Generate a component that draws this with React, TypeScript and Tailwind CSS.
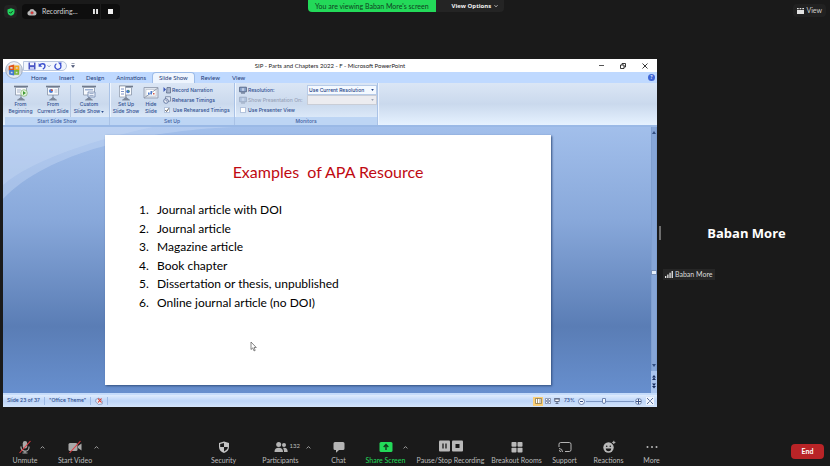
import React from "react";

type IconProps = { className?: string };

const zoomFont = "font-['Lato','Open_Sans',sans-serif]";
const ribbonFont = "font-['Inter','Open_Sans',sans-serif]";

/* ---------- Meeting icons ---------- */

function ShieldCheck({ className = "" }: IconProps) {
  return (
    <svg viewBox="0 0 16 16" className={className} aria-hidden="true">
      <path d="M8 0.5 15 3v5c0 4-3 6.400-7 7.700C4 14.400 1 12 1 8V3z" fill="#22d45e" />
      <path d="m4.600 8 2.500 2.500 4.500-4.700" fill="none" stroke="#14331f" strokeWidth="2" />
    </svg>
  );
}

function CloudRecord({ className = "" }: IconProps) {
  return (
    <svg viewBox="0 0 20 16" className={className} aria-hidden="true">
      <path d="M5 15a4.500 4.500 0 0 1-.6-8.900A6 6 0 0 1 15.700 6 4.600 4.600 0 0 1 15 15z" fill="#b9b9b9" />
      <circle cx="10" cy="9.500" r="3" fill="#e02f2f" stroke="#8d8d8d" strokeWidth="1" />
    </svg>
  );
}

function Chevron({ className = "", down = false }: IconProps & { down?: boolean }) {
  return (
    <svg viewBox="0 0 8 8" className={className} aria-hidden="true">
      <path d={down ? "M1 2.500 4 5.500 7 2.500" : "M1 5.500 4 2.500 7 5.500"} fill="none" stroke="currentColor" strokeWidth="1.500" />
    </svg>
  );
}

function MicOff() {
  return (
    <svg viewBox="0 0 14 14" className="size-[14px]" aria-hidden="true">
      <rect x="4.800" y="1" width="4.400" height="7.500" rx="2.200" fill="#a9a9a9" />
      <path d="M3 6.500v.7a4 4 0 0 0 8 0v-.7M7 11.300V13M4.500 13h5" fill="none" stroke="#a9a9a9" strokeWidth="1.200" />
      <path d="M1.500 13 12.500 1" stroke="#e2383f" strokeWidth="1.100" />
    </svg>
  );
}

function VideoOff() {
  return (
    <svg viewBox="0 0 14 14" className="size-[14px]" aria-hidden="true">
      <rect x="0.500" y="3" width="9" height="8" rx="1.500" fill="#a9a9a9" />
      <path d="m10 6 3.500-2.500v7L10 8z" fill="#a9a9a9" />
      <path d="M1.500 13 12.500 1" stroke="#e2383f" strokeWidth="1.100" />
    </svg>
  );
}

function SecurityShield() {
  return (
    <svg viewBox="0 0 14 14" className="size-[14px]" aria-hidden="true">
      <path d="M7 1.500 12 3v4c0 3-2 4.800-5 6-3-1.200-5-3-5-6V3z" fill="#c4c4c4" />
      <path d="M7 3v4H3.200V4zM7 7h3.800c-.1 2-1.500 3.400-3.800 4.500z" fill="#1a1a1a" />
    </svg>
  );
}

function People() {
  return (
    <svg viewBox="0 0 14 14" className="size-[14px]" aria-hidden="true">
      <g fill="#b4b4b4">
        <circle cx="4.700" cy="4.500" r="2.500" />
        <path d="M.5 12c0-3 1.500-4.300 4.200-4.300S9 9 9 12z" />
        <circle cx="10" cy="5" r="2" />
        <path d="M9 8c2.900-.6 4.700.8 4.700 4H10c0-1.700-.2-3-1-4z" />
      </g>
    </svg>
  );
}

function ChatBubble() {
  return (
    <svg viewBox="0 0 14 14" className="size-[14px]" aria-hidden="true">
      <path d="M3 2h8a1.500 1.500 0 0 1 1.500 1.500v5A1.500 1.500 0 0 1 11 10H7l-3 2.800V10H3a1.500 1.500 0 0 1-1.500-1.500v-5A1.500 1.500 0 0 1 3 2z" fill="#b4b4b4" />
    </svg>
  );
}

function ShareArrow() {
  return (
    <svg viewBox="0 0 14 14" className="size-[14px]" aria-hidden="true">
      <rect x="0.500" y="2" width="13" height="10" rx="1.500" fill="#23d959" />
      <path d="M7 10V5M4.700 6.900 7 4.600l2.300 2.300" fill="none" stroke="#10381c" strokeWidth="1.400" />
    </svg>
  );
}

function PauseStop() {
  return (
    <svg viewBox="0 0 26 14" className="h-[14px] w-[26px]" aria-hidden="true">
      <rect x="1" y="0.500" width="11" height="11" rx="1" fill="#b9b9b9" />
      <path d="M5 3.500v5M8 3.500v5" stroke="#1a1a1a" strokeWidth="1.300" />
      <rect x="14" y="0.500" width="11" height="11" rx="1" fill="#b9b9b9" />
      <rect x="17.500" y="4" width="4" height="4" fill="#1a1a1a" />
    </svg>
  );
}

function Rooms() {
  return (
    <svg viewBox="0 0 14 14" className="size-[14px]" aria-hidden="true">
      <g fill="#b9b9b9">
        <rect x="1.500" y="2" width="5" height="4.800" rx=".8" />
        <rect x="7.500" y="2" width="5" height="4.800" rx=".8" />
        <rect x="1.500" y="7.800" width="5" height="4.800" rx=".8" />
        <rect x="7.500" y="7.800" width="5" height="4.800" rx=".8" />
      </g>
    </svg>
  );
}

function SupportCast() {
  return (
    <svg viewBox="0 0 14 14" className="size-[14px]" aria-hidden="true">
      <g fill="none" stroke="#b4b4b4">
        <path d="M1 7V4.200A1.700 1.700 0 0 1 2.700 2.500h8.600A1.700 1.700 0 0 1 13 4.200v5.600a1.700 1.700 0 0 1-1.700 1.700H7" />
        <path d="M1 8.500a3.500 3.500 0 0 1 3.500 3.500M1 10.500A1.500 1.500 0 0 1 2.500 12" />
      </g>
    </svg>
  );
}

function Smile() {
  return (
    <svg viewBox="0 0 14 14" className="size-[14px]" aria-hidden="true">
      <circle cx="6.500" cy="7.500" r="5.200" fill="#b9b9b9" />
      <circle cx="4.700" cy="6.300" r=".8" fill="#1a1a1a" />
      <circle cx="8.300" cy="6.300" r=".8" fill="#1a1a1a" />
      <path d="M3.800 8.500h5.400a2.700 2.700 0 0 1-5.400 0z" fill="#1a1a1a" />
      <circle cx="11.700" cy="2.400" r="2" fill="#1a1a1a" />
      <path d="M11.800.8v3.200M10.200 2.400h3.200" stroke="#b9b9b9" strokeWidth="1" />
    </svg>
  );
}

function Dots() {
  return (
    <svg viewBox="0 0 14 14" className="size-[14px]" aria-hidden="true">
      <g fill="#b9b9b9">
        <circle cx="2.500" cy="7" r="1" />
        <circle cx="7" cy="7" r="1" />
        <circle cx="11.500" cy="7" r="1" />
      </g>
    </svg>
  );
}

/* ---------- PowerPoint icons ---------- */

function OfficeLogo({ className = "" }: IconProps) {
  return (
    <svg viewBox="0 0 20 20" className={className} aria-hidden="true">
      <defs>
        <linearGradient id="orb" x1="0" y1="0" x2="0" y2="1">
          <stop offset="0" stopColor="#fdfdfe" />
          <stop offset=".5" stopColor="#c9d0dc" />
          <stop offset="1" stopColor="#eef2f8" />
        </linearGradient>
      </defs>
      <circle cx="10" cy="10" r="9.300" fill="url(#orb)" stroke="#8c9ab3" strokeWidth=".8" />
      <g strokeWidth="1.800" fill="none">
        <path d="M5 6.200 9.300 5v4.400L5 9.600z" stroke="#e0561f" />
        <path d="M11 6h4v3.500h-4z" stroke="#f0a51e" />
        <path d="M5.500 11h3.800v4l-3.800-.8z" stroke="#3f75cf" />
        <path d="M11 11h3.800v3.500H11z" stroke="#7db63a" />
      </g>
    </svg>
  );
}

function Save() {
  return (
    <svg viewBox="0 0 8 8" className="size-2" aria-hidden="true">
      <path d="M.5.5h7v7h-7z" fill="#4a55c4" />
      <path d="M2 .5h4v2.700H2z" fill="#f3f5ff" />
      <path d="M2 5h4v2.500H2z" fill="#c6cdf2" />
    </svg>
  );
}

function Undo() {
  return (
    <svg viewBox="0 0 8 8" className="size-2" aria-hidden="true">
      <path d="M1.500 3.500C3 1 7 1.200 7 4c0 1.500-.8 2.600-2.200 3.200" fill="none" stroke="#3c50cf" strokeWidth="1.400" />
      <path d="M.6 1v3.700h3.600z" fill="#3c50cf" />
    </svg>
  );
}

function Redo() {
  return (
    <svg viewBox="0 0 8 8" className="size-2" aria-hidden="true">
      <path d="M2.500 1.700A3 3 0 1 0 6.300 2.500" fill="none" stroke="#3c50cf" strokeWidth="1.300" />
      <path d="M4 .4h3.600L7 4z" fill="#3c50cf" />
    </svg>
  );
}

function ScreenIcon({ kind }: { kind: "play" | "chart" | "custom" | "setup" | "hide" }) {
  return (
    <svg viewBox="0 0 16 16" className="size-4" aria-hidden="true">
      {kind === "hide" ? (
        <>
          <path d="M1 2.500h14v10.500H1z" fill="#dfe5ee" stroke="#8b96a8" strokeWidth=".8" />
          <path d="M3 4.500h10v6.500H3z" fill="#fff" stroke="#a6b0c0" strokeWidth=".5" />
          <path d="m1 13 14-10" stroke="#8b96a8" strokeWidth=".9" />
          <path d="M5 9.500V7.500h1.500v2zM7.500 9.500V6H9v3.500z" fill="#4b7bd0" />
          <path d="M10 9.500V8h1.500v1.500z" fill="#d05a4b" />
        </>
      ) : (
        <>
          <path d="M1 1.500h14" stroke="#6f7a8d" strokeWidth="1.600" />
          <path d="M2.500 2.500h11V10h-11z" fill="#f7f9fc" stroke="#8995a8" strokeWidth=".8" />
          <path d="M8 10v3M4.500 15 8 12.500 11.500 15z" fill="#7c8798" stroke="#7c8798" strokeWidth=".9" />
        </>
      )}
      {kind === "play" && (
        <>
          <path d="M4 5h4M4 7h3" stroke="#94a3bd" strokeWidth=".8" />
          <circle cx="11" cy="8" r="3.300" fill="#e4f3dd" stroke="#6fa85b" strokeWidth=".6" />
          <path d="M10 6v4l3-2z" fill="#3f9a35" />
        </>
      )}
      {kind === "chart" && (
        <>
          <circle cx="6" cy="6" r="2" fill="#4b7bd0" />
          <path d="M6 4v2h2a2 2 0 0 0-2-2z" fill="#d05a4b" />
          <path d="M9.500 5h3M9.500 7h3" stroke="#94a3bd" strokeWidth=".7" />
        </>
      )}
      {kind === "custom" && (
        <>
          <path d="M4 4h8v1.500H4z" fill="#9db1d3" />
          <path d="M7 7h7v5H7z" fill="#eaf0f9" stroke="#6f86ad" strokeWidth=".8" />
          <path d="M8.500 8.500h4M8.500 10.500h4" stroke="#6f86ad" strokeWidth=".6" />
        </>
      )}
      {kind === "setup" && (
        <>
          <path d="M1.500 1h6v11h-6z" fill="#fff" stroke="#8995a8" strokeWidth=".7" />
          <path d="M3 4h3M3 6.500h3M3 9h3" stroke="#6d86c0" strokeWidth=".9" />
          <circle cx="10" cy="6.500" r="1.800" fill="#4b7bd0" />
          <path d="M10 4.700v1.800h1.800z" fill="#59a34b" />
        </>
      )}
    </svg>
  );
}

function NarrationIcon() {
  return (
    <svg viewBox="0 0 8 8" className="size-2" aria-hidden="true">
      <path d="M.5 1 3 3.500.5 6z" fill="#3a56b5" />
      <path d="M4 1.500h3.500V7H3.500z" fill="#a9b5cc" stroke="#52627f" strokeWidth=".7" />
    </svg>
  );
}

function ClockIcon() {
  return (
    <svg viewBox="0 0 8 8" className="size-2" aria-hidden="true">
      <path d="M2.500.7h5v4.500h-5z" fill="#dbe4f4" stroke="#52627f" strokeWidth=".6" />
      <circle cx="3" cy="5" r="2.300" fill="#eef3fb" stroke="#3f5686" strokeWidth=".7" />
      <path d="M3 3.600V5h1.300" fill="none" stroke="#3f5686" strokeWidth=".6" />
    </svg>
  );
}

function MonitorIcon({ className = "" }: IconProps) {
  return (
    <svg viewBox="0 0 8 8" className={"size-2 " + className} aria-hidden="true">
      <path d="M.6 1.200h6.800v4.600H.6z" fill="#8ea6cc" stroke="#4a5a78" strokeWidth=".8" />
      <path d="M2 7h4" stroke="#4a5a78" />
      <path d="M4 2.200v2.600" stroke="#f4f7fc" />
    </svg>
  );
}

/* ---------- Meeting chrome ---------- */

function MeetingHeader() {
  return (
    <header className="grid h-[59px] shrink-0 grid-cols-[308px_auto_1fr] items-start">
      <div className="flex items-center gap-[5px] pt-1 pl-1">
        <button type="button" aria-label="Meeting security" className="grid size-[13px] place-items-center rounded-sm bg-[#232323]">
          <ShieldCheck className="size-2" />
        </button>
        <div className="flex h-[15px] items-center rounded-sm bg-[#0e0e0e] pl-[5px] text-[7px] text-[#d2d2d2]">
          <CloudRecord className="h-2 w-[10px]" />
          <span className="ml-[5px] w-[49px]">Recording...</span>
          <button type="button" aria-label="Pause recording" className="grid h-full w-[10px] place-items-center border-r border-[#1c1c1c]">
            <svg viewBox="0 0 6 6" className="size-[5px]" aria-hidden="true">
              <path d="M0 0h2.300v6H0zM3.700 0H6v6H3.700z" fill="#e6e6e6" />
            </svg>
          </button>
          <button type="button" aria-label="Stop recording" className="grid h-full w-[19px] place-items-center">
            <span className="size-[5px] bg-[#f0f0f0]" />
          </button>
        </div>
      </div>
      <div className="flex h-3 items-stretch text-[7px] leading-3">
        <p className="rounded-bl-sm bg-[#23d959] px-[7px] text-[#0f3f1f]">You are viewing Baban More's screen</p>
        <button type="button" className="flex items-center gap-[3px] rounded-br-sm bg-[#242424] pr-[6px] pl-4 font-['Open_Sans',sans-serif] text-[6px] font-bold text-[#f2f2f2]">
          View Options
          <Chevron down className="size-1" />
        </button>
      </div>
      <button type="button" className="mt-1 mr-1 flex h-[13px] items-center gap-[2px] justify-self-end rounded-sm bg-[#212121] px-1 text-[7px] text-[#d0d0d0]">
        <svg viewBox="0 0 7 6" className="h-[6px] w-[7px]" aria-hidden="true">
          <path d="M0 0h1.700v1.300H0zM2.600 0h1.700v1.300H2.600zM5.300 0H7v1.300H5.300zM0 2h7v4H0z" fill="#e2e2e2" />
        </svg>
        View
      </button>
    </header>
  );
}

function ToolButton({ label, icon, width, className = "" }: { label: string; icon: React.ReactNode; width: string; className?: string }) {
  return (
    <button type="button" className={"flex flex-col items-center gap-[2px] whitespace-nowrap text-[7px] leading-[9px] text-[#bdbdbd] " + width + " " + className}>
      <span className="relative flex">{icon}</span>
      <span>{label}</span>
    </button>
  );
}

function CaretButton({ label, className = "" }: { label: string; className?: string }) {
  return (
    <button type="button" aria-label={label} className={"mt-[3px] grid size-2 place-items-center self-start text-[#a8a8a8] " + className}>
      <Chevron className="size-[5px]" />
    </button>
  );
}

function MeetingToolbar() {
  return (
    <footer className="flex h-[59px] shrink-0 items-start justify-between pt-[33px] pr-[6px] pl-3">
      <div className="flex">
        <ToolButton label="Unmute" icon={<MicOff />} width="w-[26px]" />
        <CaretButton label="Audio options" />
        <ToolButton label="Start Video" icon={<VideoOff />} width="w-[34px]" className="ml-3" />
        <CaretButton label="Video options" />
      </div>
      <div className="flex pr-5">
        <ToolButton label="Security" icon={<SecurityShield />} width="w-[28px]" />
        <ToolButton
          label="Participants"
          icon={
            <>
              <People />
              <span className="absolute top-0 left-4 text-[6px] leading-3">132</span>
            </>
          }
          width="w-10"
          className="ml-[23px]"
        />
        <CaretButton label="Participant options" className="ml-1" />
        <ToolButton label="Chat" icon={<ChatBubble />} width="w-5" className="ml-4" />
        <ToolButton label="Share Screen" icon={<ShareArrow />} width="w-10" className="ml-[17px] text-[#23d959]!" />
        <CaretButton label="Share options" className="-ml-1" />
        <ToolButton label="Pause/Stop Recording" icon={<PauseStop />} width="w-[66px]" className="ml-2" />
        <ToolButton label="Breakout Rooms" icon={<Rooms />} width="w-[52px]" className="ml-[7px]" />
        <ToolButton label="Support" icon={<SupportCast />} width="w-[26px]" className="ml-[9px]" />
        <ToolButton label="Reactions" icon={<Smile />} width="w-[30px]" className="ml-4" />
        <ToolButton label="More" icon={<Dots />} width="w-5" className="ml-[18px]" />
      </div>
      <button type="button" className="mt-1 h-[15px] w-[33px] rounded bg-[#b92427] text-[7px] font-bold text-white">
        End
      </button>
    </footer>
  );
}

function SpeakerPanel() {
  return (
    <aside className="flex w-[173px] shrink-0 pl-[2px]">
      <div className="h-[14px] w-[2px] self-center bg-[#6e6e6e]" />
      <div className="grid flex-1 grid-rows-[1fr_auto_1fr] pl-[2px]">
        <span />
        <h2 className="text-center font-['Open_Sans',sans-serif] text-[13px] leading-5 font-bold text-white">Baban More</h2>
        <div className="mt-[26px] flex h-[11px] items-center gap-[2px] self-start justify-self-start bg-[#262626] px-[2px] text-[7px] text-[#dcdcdc]">
          <svg viewBox="0 0 8 7" className="h-[7px] w-2" aria-hidden="true">
            <path d="M0 5h1.300v2H0zM2.200 3.500h1.300V7H2.200zM4.400 1.700h1.300V7H4.400zM6.600 0h1.300v7H6.600z" fill="#e8e8e8" />
          </svg>
          Baban More
        </div>
      </div>
    </aside>
  );
}

/* ---------- PowerPoint window ---------- */

function TitleBar() {
  return (
    <div className="relative grid h-[13px] shrink-0 grid-cols-[1fr_auto_1fr] items-center bg-white">
      <div className="ml-5 flex items-center">
        <div className="flex h-[10px] items-center rounded-r-full border border-[#b9c6de] bg-[#f2f6fd] pr-1 pl-1">
          <button type="button" aria-label="Save"><Save /></button>
          <button type="button" aria-label="Undo" className="ml-[2px]"><Undo /></button>
          <Chevron down className="mx-px size-1 text-[#6075a5]" />
          <button type="button" aria-label="Redo" className="ml-[2px]"><Redo /></button>
        </div>
        <button type="button" aria-label="Customize toolbar" className="ml-1">
          <svg viewBox="0 0 4 5" className="h-[5px] w-1" aria-hidden="true">
            <path d="M.5.5h3M.5 2.500h3L2 4.500z" fill="#39466a" stroke="#39466a" strokeWidth=".5" />
          </svg>
        </button>
      </div>
      <h1 className="text-[6px] leading-3 text-[#222]">SIP - Parts and Chapters 2022 - F - Microsoft PowerPoint</h1>
      <div className="flex items-center justify-end gap-4 pr-[9px]">
        <button type="button" aria-label="Minimize"><span className="block h-px w-[5px] bg-[#555]" /></button>
        <button type="button" aria-label="Restore">
          <svg viewBox="0 0 6 6" className="size-[6px]" aria-hidden="true">
            <path d="M.5 2h3.500v3.500H.5zM2 2V.5h3.500V4H4" fill="none" stroke="#222" strokeWidth=".9" />
          </svg>
        </button>
        <button type="button" aria-label="Close">
          <svg viewBox="0 0 6 6" className="size-[6px]" aria-hidden="true">
            <path d="m.5.5 5 5m0-5-5 5" stroke="#222" strokeWidth=".9" />
          </svg>
        </button>
      </div>
      <button type="button" aria-label="Office menu" className="absolute top-[2px] left-[2px] z-10">
        <OfficeLogo className="size-[18px]" />
      </button>
    </div>
  );
}

const tabs = ["Home", "Insert", "Design", "Animations", "Slide Show", "Review", "View"];

function TabRow() {
  return (
    <nav className="flex h-[11px] shrink-0 items-stretch bg-[#bfd9ff] pl-[22px] text-[6px] leading-[11px] text-[#1c3a78]">
      {tabs.map((tab) => (
        <button
          key={tab}
          type="button"
          className={
            tab === "Slide Show"
              ? "rounded-t-sm border border-b-0 border-[#9cbbe8] bg-[#eef5fe] px-[6px] leading-[10px]"
              : "px-[6px]"
          }
        >
          {tab}
        </button>
      ))}
      <button type="button" aria-label="Help" className="mr-[2px] ml-auto grid size-[7px] place-items-center self-center rounded-full bg-[#3f66d6] text-[5px] leading-none font-bold text-white">
        ?
      </button>
    </nav>
  );
}

function RibbonGroup({ title, width, children }: { title: string; width: string; children: React.ReactNode }) {
  return (
    <section className={"flex shrink-0 flex-col border-r border-[#a9c2e6] shadow-[1px_0_0_#eef5ff] " + width}>
      <div className="flex flex-1 pt-[2px]">{children}</div>
      <h3 className="h-2 bg-[#bdd5f4] text-center leading-2 text-[#3f5f9f]">{title}</h3>
    </section>
  );
}

function SelectArrow({ className = "" }: IconProps) {
  return (
    <svg viewBox="0 0 4 3" className={"h-[2px] w-[3px] " + className} aria-hidden="true">
      <path d="M0 0h4L2 3z" fill="currentColor" />
    </svg>
  );
}

function BigButton({ kind, lines, width, arrow = false }: { kind: "play" | "chart" | "custom" | "setup" | "hide"; lines: string[]; width: string; arrow?: boolean }) {
  return (
    <button type="button" className={"flex shrink-0 flex-col items-center whitespace-nowrap " + width}>
      <ScreenIcon kind={kind} />
      <span>{lines[0]}</span>
      <span className="flex items-center gap-px">
        {lines[1]}
        {arrow && <SelectArrow />}
      </span>
    </button>
  );
}

function Ribbon() {
  const check = "size-[6px] appearance-none border border-[#b4c4dd] bg-white";
  return (
    <div className={"flex h-[42px] shrink-0 bg-linear-to-b from-[#dbe6f5] via-[#cad9ed] to-[#e6f2ff] pl-[2px] text-[5px] leading-[7px] font-medium text-[#2f4f90] " + ribbonFont}>
      <RibbonGroup title="Start Slide Show" width="w-[105px]">
        <BigButton kind="play" lines={["From", "Beginning"]} width="w-[31px]" />
        <BigButton kind="chart" lines={["From", "Current Slide"]} width="w-[34px]" />
        <div className="w-px bg-[#b3c6e2]" />
        <BigButton kind="custom" lines={["Custom", "Slide Show"]} width="w-9" arrow />
      </RibbonGroup>
      <RibbonGroup title="Set Up" width="w-[125px]">
        <BigButton kind="setup" lines={["Set Up", "Slide Show"]} width="w-[32px]" />
        <BigButton kind="hide" lines={["Hide", "Slide"]} width="w-[18px]" />
        <div className="flex flex-col pl-[3px] leading-[10px] whitespace-nowrap">
          <button type="button" className="flex items-center gap-px"><NarrationIcon />Record Narration</button>
          <button type="button" className="flex items-center gap-px"><ClockIcon />Rehearse Timings</button>
          <label className="flex items-center gap-[3px] pl-px">
            <span className="relative flex">
              <input type="checkbox" defaultChecked className={check} />
              <svg viewBox="0 0 6 6" className="pointer-events-none absolute inset-0 size-[6px]" aria-hidden="true">
                <path d="m1.300 3 1.300 1.500L4.800 1.300" fill="none" stroke="#444" strokeWidth=".9" />
              </svg>
            </span>
            Use Rehearsed Timings
          </label>
        </div>
      </RibbonGroup>
      <RibbonGroup title="Monitors" width="w-[143px]">
        <div className="grid flex-1 grid-cols-[1fr_70px] grid-rows-[10px_10px_10px] pl-1 leading-[10px] whitespace-nowrap">
          <label htmlFor="resolution" className="flex items-center gap-px"><MonitorIcon />Resolution:</label>
          <div className="relative text-[#1d3f86]">
            <select id="resolution" className="block h-[10px] w-full appearance-none border border-[#b7cbe8] bg-[#f4f9ff] pl-px leading-[8px]">
              <option>Use Current Resolution</option>
            </select>
            <SelectArrow className="pointer-events-none absolute top-1 right-[3px]" />
          </div>
          <label htmlFor="monitor" className="flex items-center gap-px text-[#97a3b8]"><MonitorIcon className="opacity-40" />Show Presentation On:</label>
          <div className="relative text-[#9aa5b8]">
            <select id="monitor" disabled className="block h-[10px] w-full appearance-none border border-[#c9cdd6] bg-[#ececf0] opacity-100">
              <option></option>
            </select>
            <SelectArrow className="pointer-events-none absolute top-1 right-[3px]" />
          </div>
          <label className="flex items-center gap-[2px] pl-px">
            <input type="checkbox" className={check} />
            Use Presenter View
          </label>
        </div>
      </RibbonGroup>
    </div>
  );
}

const examples = [
  "Journal article with DOI",
  "Journal article",
  "Magazine article",
  "Book chapter",
  "Dissertation or thesis, unpublished",
  "Online journal article (no DOI)",
];

function Slide() {
  return (
    <article className="relative mt-2 mb-2 flex-1 bg-white pt-[25px] text-black shadow-[1px_1px_2px_#33507f]">
      <h2 className="text-center text-[16px] leading-6 whitespace-pre text-[#c00a12]">{"Examples  of APA Resource"}</h2>
      <ol className="mt-[17px] flex h-[111px] flex-col justify-between pl-[34px] text-[12px] leading-[18px]">
        {examples.map((item, i) => (
          <li key={item} className="flex">
            <span className="w-[18px]">{i + 1}.</span>
            {item}
          </li>
        ))}
      </ol>
      <svg viewBox="0 0 7 11" className="absolute top-[206px] left-[145px] h-[11px] w-[7px]" aria-hidden="true">
        <path d="M1 1v7.500l1.700-1.600 1.300 3 1.200-.5L4 6.500h2.300z" fill="#fff" stroke="#555" strokeWidth=".7" />
      </svg>
    </article>
  );
}

function ScrollBar() {
  return (
    <div className="flex w-[6px] shrink-0 flex-col items-center bg-[#a9c4ee]">
      <div className="flex w-full flex-1 flex-col items-center border-x border-[#7f9fd0] bg-[#86a6d8]">
        <svg viewBox="0 0 4 3" className="mt-1 h-[3px] w-1" aria-hidden="true"><path d="M0 3h4L2 0z" fill="#334e80" /></svg>
        <span className="flex-[137]" />
        <span className="h-[5px] w-[6px] border border-[#7690ba] bg-[#e6effb]" />
        <span className="flex-[90]" />
        <svg viewBox="0 0 4 3" className="mb-1 h-[3px] w-1" aria-hidden="true"><path d="M0 0h4L2 3z" fill="#334e80" /></svg>
      </div>
      <svg viewBox="0 0 6 22" className="h-[22px] w-[6px]" aria-hidden="true">
        <path d="M1 6.500 3 4l2 2.500zM1 9l2-2.500L5 9zM1 12.500h4L3 15zM1 15h4l-2 2.500z" fill="#162b5c" />
      </svg>
    </div>
  );
}

function Workspace() {
  return (
    <div className="relative flex min-h-0 flex-1 border-t-2 border-b-2 border-t-[#9ab9e6] border-b-[#c5dcfb] bg-[linear-gradient(to_bottom,#a2bfeb_0%,#88a8da_35%,#5a7db5_75%,#678fce_100%)]">
      <svg viewBox="0 0 230 72" className="absolute top-0 left-0 h-[72px] w-[230px]" aria-hidden="true">
        <path d="M0 0h230C140 4 45 25 0 72z" fill="#dbe8fb" opacity=".3" />
        <path d="M0 0h150C95 12 30 32 0 58z" fill="#dbe8fb" opacity=".22" />
      </svg>
      <div className="flex flex-1 pr-[100px] pl-[102px]">
        <Slide />
      </div>
      <ScrollBar />
    </div>
  );
}

function StatusBar() {
  const divider = <span className="h-2 w-px bg-[#9dbae6]" />;
  return (
    <div className="flex h-[12px] shrink-0 items-center bg-linear-to-b from-[#dfecfd] via-[#bdd5f8] to-[#d3e4fb] pl-1 text-[5px] font-medium text-[#2a4a8a]">
      <div className={"flex items-center gap-1 whitespace-nowrap " + ribbonFont}>
        <span>Slide 23 of 37</span>
        {divider}
        <span>"Office Theme"</span>
        {divider}
        <button type="button" aria-label="Spelling check">
          <svg viewBox="0 0 8 8" className="size-2" aria-hidden="true">
            <path d="M.8 2.500 4 1l3.200 3v3L3.500 7.500.8 5z" fill="#e7edf8" stroke="#6579a3" strokeWidth=".6" />
            <path d="m3 1.500 3.500 4m0-4L3 5.500" stroke="#dc3527" strokeWidth="1.100" />
          </svg>
        </button>
        {divider}
      </div>
      <div className={"ml-auto flex items-center " + ribbonFont}>
        <button type="button" aria-label="Normal view" className="grid h-[9px] w-[10px] place-items-center bg-[#fbcf74]">
          <svg viewBox="0 0 7 6" className="h-[6px] w-[7px]" aria-hidden="true"><path d="M.5.5h6v5h-6zM2.500.5v5M4 2h2M4 4h2" fill="#fff" stroke="#7e6a3a" strokeWidth=".7" /></svg>
        </button>
        <button type="button" aria-label="Slide sorter" className="grid h-[9px] w-[9px] place-items-center">
          <svg viewBox="0 0 6 6" className="size-[6px]" aria-hidden="true"><path d="M.5.500h2v2h-2zM3.500.5h2v2h-2zM.5 3.500h2v2h-2zM3.500 3.500h2v2h-2z" fill="#fff" stroke="#6a7593" strokeWidth=".7" /></svg>
        </button>
        <button type="button" aria-label="Slide show view" className="grid h-[9px] w-[9px] place-items-center">
          <svg viewBox="0 0 6 6" className="size-[6px]" aria-hidden="true"><path d="M0 .7h6M.8 1h4.400v2.500H.8zM3 3.500v2M1.500 5.600h3" fill="#fff" stroke="#47536f" strokeWidth=".8" /></svg>
        </button>
        <span className="ml-[3px] w-[14px]">73%</span>
        <button type="button" aria-label="Zoom out" className="grid size-[7px] place-items-center rounded-full border border-[#6f85b0] bg-[#f3f8ff]">
          <span className="h-px w-[3px] bg-[#3a5286]" />
        </button>
        <input
          type="range"
          aria-label="Zoom"
          min={10}
          max={400}
          defaultValue={150}
          className="mx-px h-[7px] w-12 appearance-none bg-[linear-gradient(#7d97c4,#7d97c4)] bg-[length:100%_1px] bg-center bg-no-repeat [&::-webkit-slider-thumb]:h-[6px] [&::-webkit-slider-thumb]:w-1 [&::-webkit-slider-thumb]:appearance-none [&::-webkit-slider-thumb]:rounded-b-sm [&::-webkit-slider-thumb]:border [&::-webkit-slider-thumb]:border-[#6f85b0] [&::-webkit-slider-thumb]:bg-[#f3f8ff]"
        />
        <button type="button" aria-label="Zoom in" className="grid size-[7px] place-items-center rounded-full border border-[#6f85b0] bg-[#f3f8ff]">
          <svg viewBox="0 0 5 5" className="size-[5px]" aria-hidden="true"><path d="M2.500 0v5M0 2.500h5" stroke="#3a5286" /></svg>
        </button>
        <button type="button" aria-label="Fit to window" className="mr-[3px] ml-1 grid size-2 place-items-center bg-[#eef4fd]">
          <svg viewBox="0 0 8 8" className="size-2" aria-hidden="true"><path d="m1 1 2 2m4-2L5 3M1 7l2-2m4 2L5 5" stroke="#5a6e98" strokeWidth="1" /><path d="M3 3h2v2H3z" fill="#8b9bbd" /></svg>
        </button>
      </div>
    </div>
  );
}

function PowerPointWindow() {
  return (
    <section aria-label="Shared screen" className="ml-[3px] flex min-w-0 flex-1 flex-col overflow-hidden bg-[#bfd9ff]">
      <TitleBar />
      <TabRow />
      <Ribbon />
      <Workspace />
      <StatusBar />
    </section>
  );
}

export default function App() {
  return (
    <div className={"flex h-screen min-w-[640px] flex-col bg-[#1a1a1a] " + zoomFont}>
      <MeetingHeader />
      <main className="flex min-h-0 flex-1">
        <PowerPointWindow />
        <SpeakerPanel />
      </main>
      <MeetingToolbar />
    </div>
  );
}
